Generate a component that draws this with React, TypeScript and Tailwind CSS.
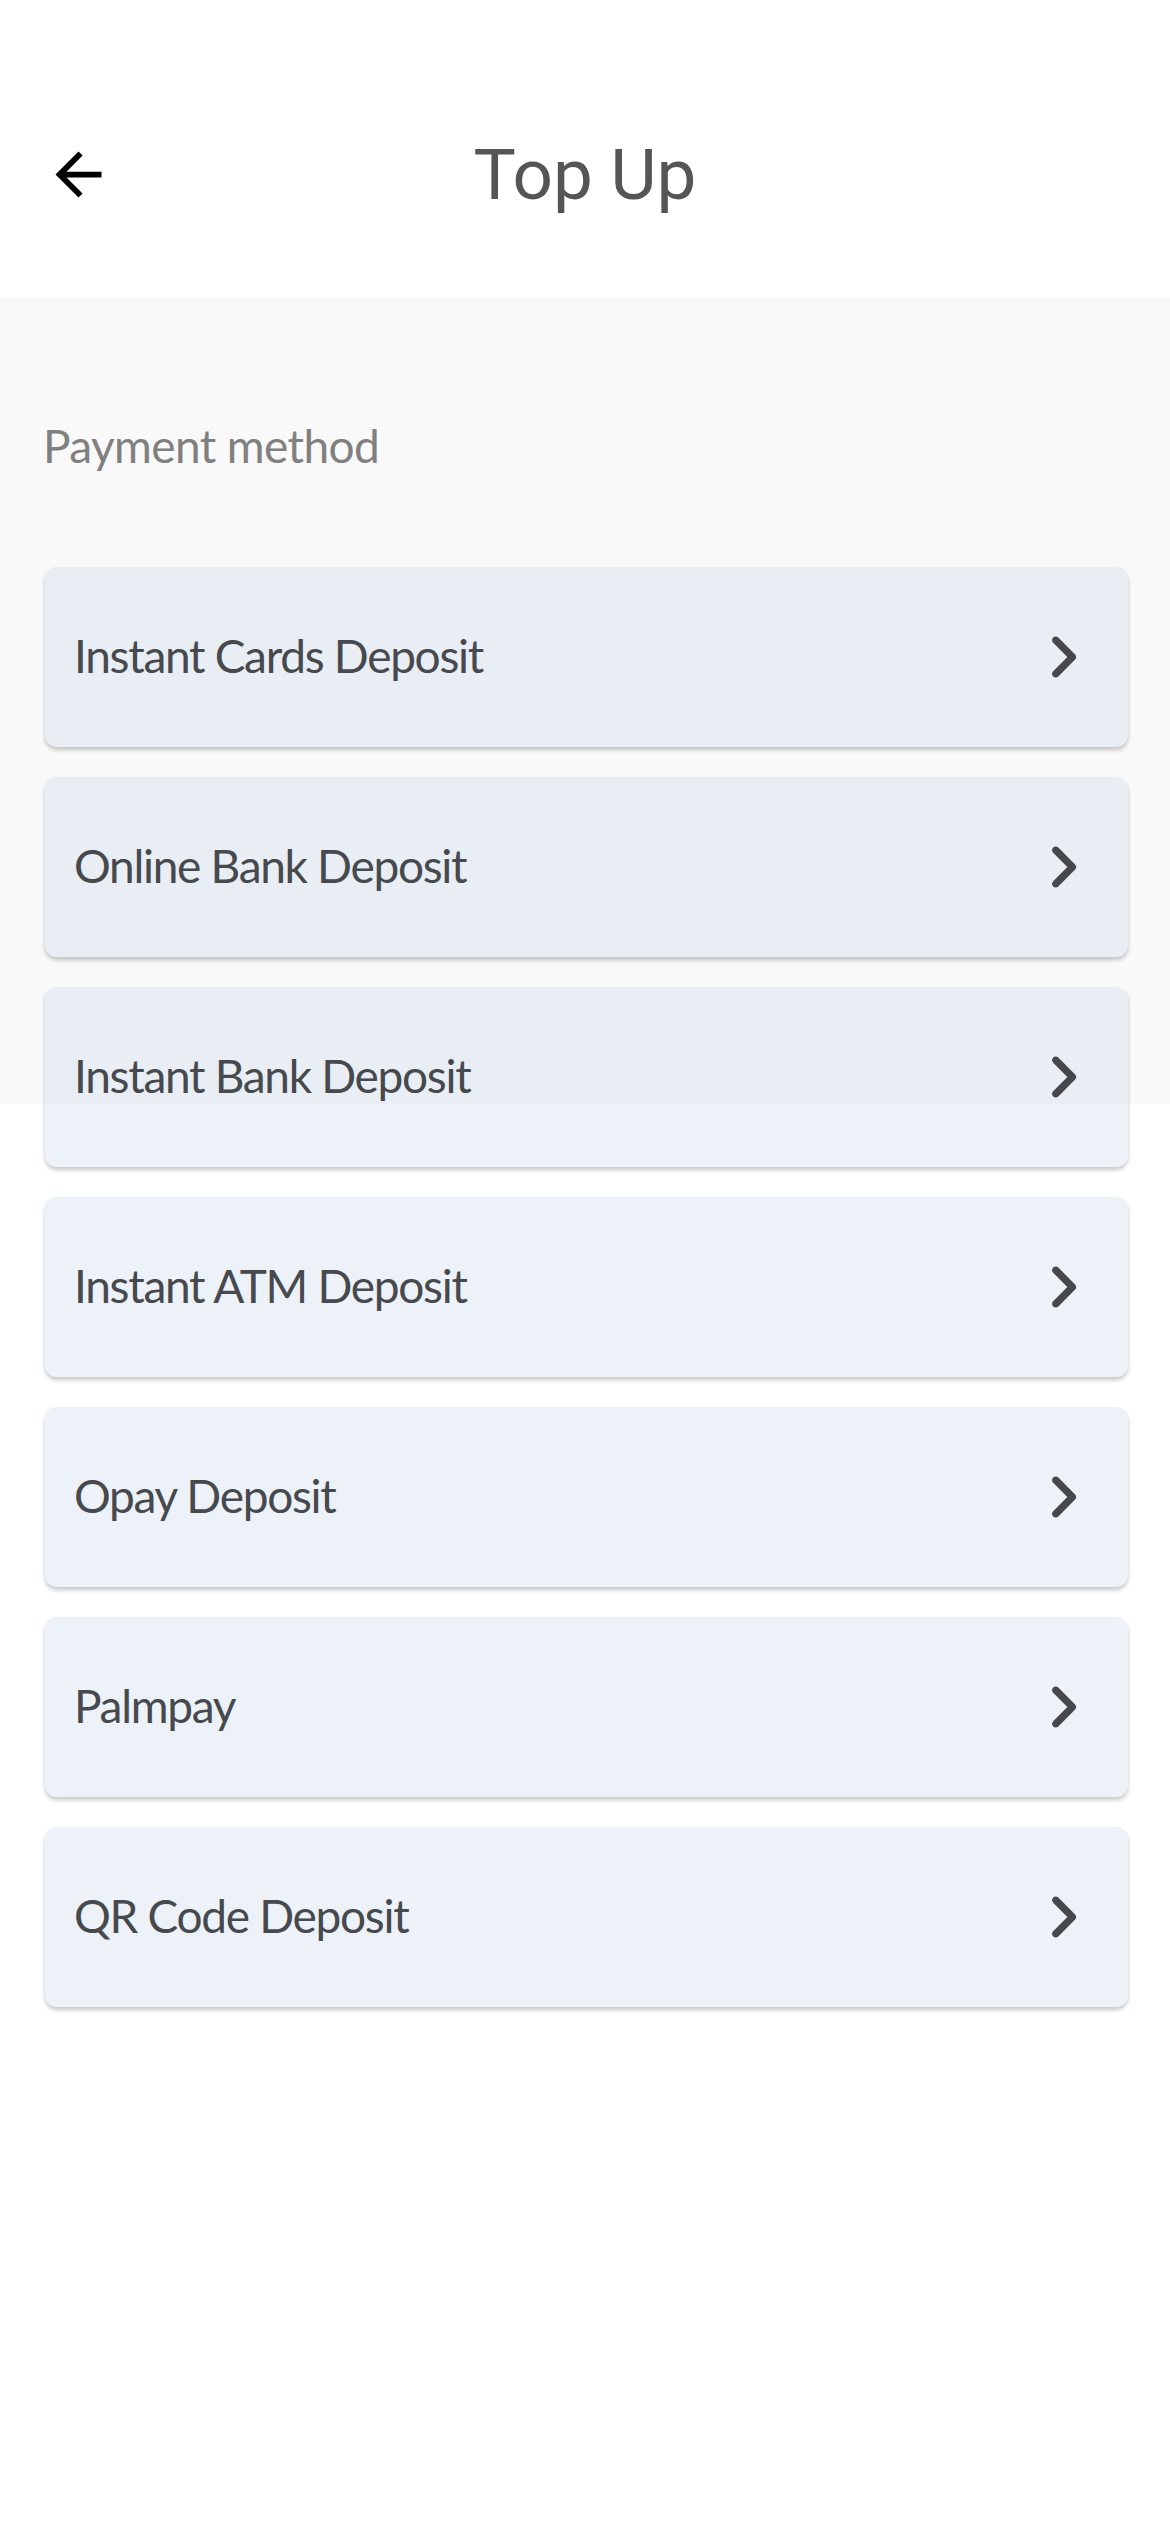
import React from "react";

const methods = [
  "Instant Cards Deposit",
  "Online Bank Deposit",
  "Instant Bank Deposit",
  "Instant ATM Deposit",
  "Opay Deposit",
  "Palmpay",
  "QR Code Deposit",
];

function BackArrow() {
  return (
    <svg width="69" height="69" viewBox="0 0 24 24" className="shrink-0">
      <path
        d="M20 11H7.83l5.59-5.59L12 4l-8 8 8 8 1.41-1.41L7.83 13H20v-2z"
        fill="#000"
      />
    </svg>
  );
}

function Chevron() {
  return (
    <svg width="88" height="88" viewBox="0 0 24 24" className="shrink-0">
      <path
        d="M9.31 6.71c-.39.39-.39 1.02 0 1.41L13.19 12l-3.88 3.88c-.39.39-.39 1.02 0 1.41.39.39 1.02.39 1.41 0l4.59-4.59c.39-.39.39-1.02 0-1.41L10.72 6.7c-.38-.38-1.02-.38-1.41.01z"
        fill="#46484c"
      />
    </svg>
  );
}

export default function App() {
  return (
    <div className="min-h-[2532px] w-[1170px] bg-white">
      <header className="h-[297px] bg-white pt-[140px]">
        <div className="flex items-center pl-[44px] pr-[44px] h-[69px]">
          <BackArrow />
          <h1
            className="flex-1 text-center text-[71px] leading-[69px] text-[#555555]"
            style={{ fontFamily: "Roboto, 'Liberation Sans', sans-serif" }}
          >
            Top Up
          </h1>
          <div className="w-[69px] shrink-0" />
        </div>
      </header>
      <main
        className="bg-[linear-gradient(to_bottom,#f9f9f9_807px,#ffffff_807px)] pt-[121px] pl-[45px] pr-[42px] pb-[60px]"
        style={{ fontFamily: "Lato, 'Open Sans', sans-serif" }}
      >
        <p className="text-[46px] leading-[56px] tracking-[-0.6px] text-[#808080] -ml-[2px]">
          Payment method
        </p>
        <div className="mt-[93px] flex flex-col gap-[30px]">
          {methods.map((m) => (
            <div
              key={m}
              className="flex h-[180px] items-center justify-between rounded-[12px] bg-[rgba(201,213,234,0.33)] pl-[29px] pr-[21px] shadow-[0_3px_4px_rgba(0,0,0,0.22)]"
            >
              <span className="text-[46px] leading-[56px] tracking-[-1.3px] text-[#46494d] -mt-[3px]">
                {m}
              </span>
              <Chevron />
            </div>
          ))}
        </div>
      </main>
    </div>
  );
}
